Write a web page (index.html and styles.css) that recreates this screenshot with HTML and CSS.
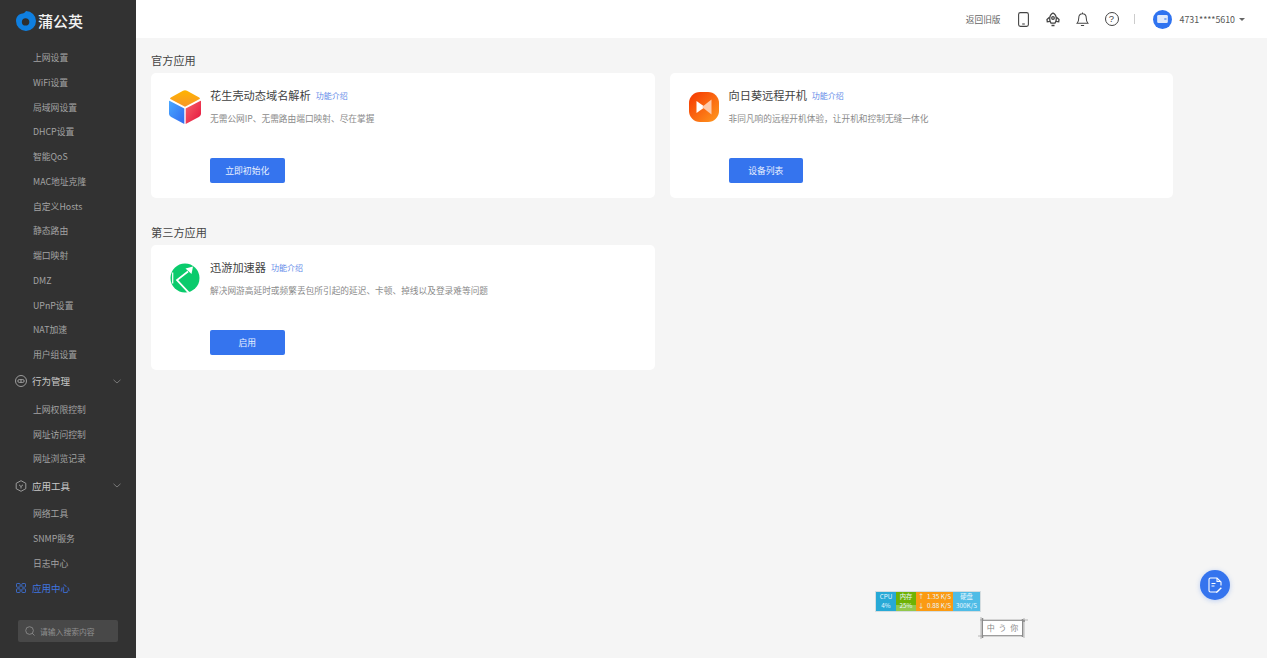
FILE: index.html
```html
<!DOCTYPE html>
<html lang="zh-CN">
<head>
<meta charset="utf-8">
<title>蒲公英</title>
<link rel="stylesheet" href="styles.css">
</head>
<body>
<div class="app">
  <aside class="sidebar">
    <div class="logo">
      <svg class="logo-mark" viewBox="0 0 20 20" width="20" height="20"><path fill="#0f7fe0" d="M10 0a10 10 0 0 1 10 10 10 10 0 0 1-10 10A10 10 0 0 1 0 10C0 5.500 3 2.800 6.500 2.500 8 2.300 9 1.500 10 0z"/><path fill="#2e2e2e" d="M9.500 7.200c2.200 0 3.900 1.600 3.900 3.700s-1.700 3.700-3.900 3.700-3.700-1.600-3.700-3.700 1.500-3.700 3.700-3.700z"/></svg>
      <span class="logo-text">蒲公英</span>
    </div>
    <nav class="nav">
      <a class="sub">上网设置</a>
      <a class="sub">WiFi设置</a>
      <a class="sub">局域网设置</a>
      <a class="sub">DHCP设置</a>
      <a class="sub">智能QoS</a>
      <a class="sub">MAC地址克隆</a>
      <a class="sub">自定义Hosts</a>
      <a class="sub">静态路由</a>
      <a class="sub">端口映射</a>
      <a class="sub">DMZ</a>
      <a class="sub">UPnP设置</a>
      <a class="sub">NAT加速</a>
      <a class="sub">用户组设置</a>
      <div class="group">
        <svg viewBox="0 0 12 12" width="12" height="12" fill="none" stroke="#b5b5b5" stroke-width=".8"><circle cx="6" cy="6" r="5.500"/><rect x="2.800" y="4.600" width="6.400" height="2.800" rx="1.400"/><path d="M6 4.600v2.800"/></svg>
        <span>行为管理</span>
        <svg class="chev" viewBox="0 0 8 5" width="8" height="5" fill="none" stroke="#8a8a8a" stroke-width=".8"><path d="M.5.8 4 4 7.500.8"/></svg>
      </div>
      <a class="sub">上网权限控制</a>
      <a class="sub">网址访问控制</a>
      <a class="sub">网址浏览记录</a>
      <div class="group">
        <svg viewBox="0 0 12 12" width="12" height="12" fill="none" stroke="#b5b5b5" stroke-width=".8"><path d="M6 .7 10.800 3.300v5.400L6 11.300 1.200 8.700V3.300z"/><path d="M4 4.800 6 6.500l2-1.700M6 6.500v2"/></svg>
        <span>应用工具</span>
        <svg class="chev" viewBox="0 0 8 5" width="8" height="5" fill="none" stroke="#8a8a8a" stroke-width=".8"><path d="M.5.8 4 4 7.500.8"/></svg>
      </div>
      <a class="sub">网络工具</a>
      <a class="sub">SNMP服务</a>
      <a class="sub">日志中心</a>
      <div class="group active">
        <svg viewBox="0 0 12 12" width="10" height="10" fill="none" stroke="#3f75e0" stroke-width="1"><rect x=".6" y=".6" width="4.400" height="4.400" rx=".8"/><rect x="7" y=".6" width="4.400" height="4.400" rx=".8"/><rect x=".6" y="7" width="4.400" height="4.400" rx=".8"/><rect x="7" y="7" width="4.400" height="4.400" rx=".8"/></svg>
        <span>应用中心</span>
      </div>
    </nav>
    <div class="search">
      <svg viewBox="0 0 11 11" width="10" height="10" fill="none" stroke="#999" stroke-width=".8"><circle cx="5" cy="5" r="4.200"/><path d="m8 8 2.500 2.500"/></svg>
      <span>请输入搜索内容</span>
    </div>
  </aside>

  <div class="main">
    <header class="topbar">
      <span class="old">返回旧版</span>
      <svg class="tool tool-phone" viewBox="0 0 11 15" width="11" height="15" fill="none" stroke="#444" stroke-width="1.100"><rect x=".6" y=".6" width="9.800" height="13.800" rx="1.800"/><path d="M4.200 12h2.600"/></svg>
      <svg class="tool" viewBox="0 0 14 15" width="14" height="15" fill="none" stroke="#444" stroke-width="1.300"><path d="M7 1c2.300 1.200 3.300 3.300 3.300 5.700 0 1.800-.5 3.300-1.300 4.500H5C4.200 10 3.700 8.500 3.700 6.700 3.700 4.300 4.700 2.200 7 1z"/><circle cx="7" cy="6" r="1.300"/><path d="M3.500 5.200 1 7.600l.3 2.200 2.900-.4M10.500 5.200 13 7.600l-.3 2.200-2.900-.4M5.500 13.500h3"/></svg>
      <svg class="tool" viewBox="0 0 13 16" width="13" height="15" fill="none" stroke="#444" stroke-width="1.100"><path d="M6.500 1.800c-2.700 0-4 2-4 4.500 0 2.800-.5 4.300-1.800 5.700h11.600C11 10.600 10.500 9.100 10.500 6.300c0-2.500-1.300-4.500-4-4.500zM6.500.5v1.300M4.800 14.300h3.400"/></svg>
      <span class="help">?</span>
      <span class="sep"></span>
      <span class="avatar"><svg viewBox="0 0 12 9" width="11" height="8"><rect width="12" height="9" rx="1.500" fill="#dfe9fb"/><rect x="8" y="3.500" width="2.500" height="2" fill="#7aa3ee"/></svg></span>
      <span class="account">4731****5610</span>
      <span class="caret"></span>
    </header>

    <main class="content">
      <h2 class="section-title">官方应用</h2>
      <div class="cards">
        <article class="card">
          <svg class="app-icon icon-cube" viewBox="0 0 32 34" width="32" height="34">
            <defs>
              <linearGradient id="cy" x1="0" y1="0" x2="0" y2="1"><stop offset="0" stop-color="#ffb400"/><stop offset="1" stop-color="#f7962a"/></linearGradient>
              <linearGradient id="cb" x1="0" y1="0" x2="1" y2="1"><stop offset="0" stop-color="#4aa8ff"/><stop offset="1" stop-color="#2f6bf0"/></linearGradient>
              <linearGradient id="cr" x1="0" y1="0" x2="1" y2="1"><stop offset="0" stop-color="#f8646a"/><stop offset="1" stop-color="#e4123c"/></linearGradient>
            </defs>
            <path fill="url(#cy)" d="M14 .8c1.300-.7 2.700-.7 4 0l12.200 6.600c.9.500.9 1.400 0 1.900L16 16.800 1.800 9.300c-.9-.5-.9-1.400 0-1.900z"/>
            <path fill="url(#cb)" d="M.4 10.700 15.300 18.500V34L2.200 27C.8 26.200 0 25 0 23.500V11.500c0-.4.100-.6.400-.8z"/>
            <path fill="url(#cr)" d="M31.600 10.700 16.700 18.500V34l13.100-7c1.400-.8 2.200-2 2.200-3.500V11.500c0-.4-.1-.6-.4-.8z"/>
          </svg>
          <div class="card-body">
            <div class="card-head"><h3>花生壳动态域名解析</h3><a class="intro">功能介绍</a></div>
            <p class="desc">无需公网IP、无需路由端口映射、尽在掌握</p>
            <button class="btn">立即初始化</button>
          </div>
        </article>
        <article class="card">
          <svg class="app-icon icon-sun" viewBox="0 0 30 30" width="30" height="30">
            <defs><linearGradient id="so" x1="0" y1="0" x2="1" y2="1"><stop offset="0" stop-color="#f53500"/><stop offset="1" stop-color="#ff9a20"/></linearGradient></defs>
            <rect width="30" height="30" rx="11" fill="url(#so)"/>
            <path fill="#fff" d="M7.500 9 16 15l-8.500 6z"/>
            <path fill="#ffc9a8" d="M22.500 7.500v15L13 15z"/>
          </svg>
          <div class="card-body">
            <div class="card-head"><h3>向日葵远程开机</h3><a class="intro">功能介绍</a></div>
            <p class="desc">非同凡响的远程开机体验，让开机和控制无缝一体化</p>
            <button class="btn">设备列表</button>
          </div>
        </article>
      </div>
      <h2 class="section-title second">第三方应用</h2>
      <div class="cards">
        <article class="card">
          <svg class="app-icon icon-xun" viewBox="0 0 30 30" width="30" height="30">
            <circle cx="15" cy="15" r="14.500" fill="#0acb6c"/>
            <path fill="none" stroke="#fff" stroke-width="1.200" d="M2.700 9.500v11"/>
            <path fill="none" stroke="#fff" stroke-width="1.800" d="M18 8.500 7 17l13 14"/>
            <path fill="#fff" d="M15.500 5.500 23 3.500 21.500 11z"/>
          </svg>
          <div class="card-body">
            <div class="card-head"><h3>迅游加速器</h3><a class="intro">功能介绍</a></div>
            <p class="desc">解决网游高延时或频繁丢包所引起的延迟、卡顿、掉线以及登录难等问题</p>
            <button class="btn">启用</button>
          </div>
        </article>
      </div>
    </main>
  </div>
</div>

<div class="monitor">
  <div class="m-cell m-cpu"><span>CPU</span><span>4%</span></div>
  <div class="m-cell m-mem"><span>内存</span><span>25%</span></div>
  <div class="m-cell m-net"><span>↑&nbsp; 1.35 K/S</span><span>↓&nbsp; 0.88 K/S</span></div>
  <div class="m-cell m-disk"><span>硬盘</span><span>300K/S</span></div>
</div>
<div class="stamp">
  <svg class="stamp-frame" viewBox="0 0 50 22" width="50" height="22" fill="none" stroke="#8c8c8c"><path stroke-width="1.500" d="M4 4h43M4 18h41M4.500 1v20M44.500 2v18"/><path stroke-width=".6" d="M2 3h48M0 19h44M3 0v22M46 1v20"/></svg>
  <span class="stamp-text">中 う 你</span>
</div>
<button class="fab" aria-label="反馈">
  <svg viewBox="0 0 14 16" width="14" height="16" fill="none" stroke="#fff" stroke-width="1.100"><path d="M9 15H2.500C1.700 15 1 14.300 1 13.500v-11C1 1.700 1.700 1 2.500 1H9l4 4v3.500"/><path d="M9 1v3.500h4M3.500 6.500h4M3.500 9h3"/><path d="m8.500 14.500 4.300-4.300 1 1-4.300 4.300-1.500.4z" fill="#fff" stroke="none"/></svg>
</button>
</body>
</html>
```
FILE: styles.css
```css
* { box-sizing: border-box; }
html, body { margin: 0; height: 100%; }
body {
  font-family: "Noto Sans CJK SC", "Noto Sans", sans-serif;
  background: #f5f5f5;
  overflow: hidden;
}
.app { display: flex; height: 658px; }

.sidebar {
  flex: 0 0 136px;
  background: #323232;
  display: flex;
  flex-direction: column;
  overflow: hidden;
}
.logo {
  display: flex;
  align-items: center;
  gap: 2px;
  height: 46px;
  padding: 0 0 5px 16px;
  flex: none;
}
.logo-text { color: #f2f2f2; font-size: 15px; font-weight: 500; line-height: 1; }
.nav { display: flex; flex-direction: column; flex: none; }
.sub {
  display: block;
  height: 24.75px;
  line-height: 24.75px;
  padding-left: 33px;
  font-size: 8.8px;
  color: #a3a3a3;
  white-space: nowrap;
}
.group {
  display: flex;
  align-items: center;
  height: 30px;
  padding: 0 0 3px 15px;
  font-size: 9.5px;
  color: #c9c9c9;
  gap: 5px;
}
.chev { margin-left: auto; margin-right: 15px; }
.group.active { color: #3f75e0; padding: 0 0 0 16px; gap: 6px; height: 23px; }
.search {
  margin: 21px 0 0 18px;
  width: 100px;
  height: 22px;
  background: #484848;
  border-radius: 2px;
  display: flex;
  align-items: center;
  gap: 5px;
  padding-left: 7px;
  font-size: 7.8px;
  color: #8f8f8f;
}

.main { flex: 1; min-width: 0; display: flex; flex-direction: column; }
.topbar {
  flex: none;
  height: 38px;
  background: #fff;
  display: flex;
  align-items: center;
  padding-right: 22px;
  justify-content: flex-end;
  color: #555;
}
.old { font-size: 8.7px; margin-right: 17px; color: #666; white-space: nowrap; }
.tool { margin-right: 16px; flex: none; }
.tool-phone { margin-right: 17px; }
.help {
  width: 14px;
  height: 14px;
  border: 1.1px solid #444;
  border-radius: 50%;
  font-size: 9.5px;
  line-height: 12px;
  text-align: center;
  color: #444;
  font-family: "Liberation Sans", sans-serif;
}
.sep { width: 1px; height: 10px; background: #ccc; margin: 0 18px 0 15px; }
.avatar {
  width: 19px;
  height: 19px;
  border-radius: 50%;
  background: #2f73f0;
  display: flex;
  align-items: center;
  justify-content: center;
  margin-right: 8px;
}
.account { font-size: 8.8px; color: #555; }
.caret {
  width: 0;
  height: 0;
  margin-left: 4px;
  border: 3px solid transparent;
  border-top-color: #666;
  border-bottom-width: 0;
}

.content { flex: 1; padding: 0 94px 0 15px; }
.section-title {
  margin: 0;
  height: 35px;
  line-height: 45px;
  font-size: 11.2px;
  font-weight: 400;
  color: #444;
  white-space: nowrap;
}
.section-title.second { height: 34px; margin-top: 13px; line-height: 42px; }
.cards { display: grid; grid-template-columns: repeat(2, 1fr); gap: 15px; }
.card {
  height: 125px;
  background: #fff;
  border-radius: 5px;
  display: flex;
}
.app-icon { flex: none; margin: 17px 9px 0 18px; }
.icon-sun { margin: 19px 10px 0 19px; }
.icon-xun { margin: 18px 10px 0 19px; }
.card-body { min-width: 0; }
.card-head { display: flex; align-items: center; gap: 5px; margin-top: 14px; height: 17px; }
h3 { margin: 0; font-size: 11.2px; font-weight: 400; color: #3f3f3f; line-height: 17px; white-space: nowrap; }
.intro { font-size: 8px; line-height: 17px; color: #5f8ae8; white-space: nowrap; }
.desc { margin: 8px 0 0; font-size: 8.7px; line-height: 13px; color: #8a8a8a; white-space: nowrap; }
.btn {
  display: block;
  margin-top: 33px;
  width: 74.5px;
  height: 25px;
  border: 0;
  border-radius: 2px;
  background: #3574ee;
  color: #e8f0ff;
  font: inherit;
  font-size: 8.8px;
  padding: 0;
}
.monitor {
  position: absolute;
  left: 875px;
  top: 591px;
  width: 106px;
  height: 21px;
  display: flex;
  border: 1px solid #d5dde0;
  font-size: 6.3px;
  line-height: 8.5px;
  color: #e8f6ff;
  text-align: center;
}
.m-cell { display: flex; flex-direction: column; justify-content: center; white-space: nowrap; }
.m-cpu { width: 20px; background: #27a9d6; }
.m-mem { width: 20px; background: linear-gradient(#6fb204 70%, #93c84c 70%); }
.m-net { width: 37px; background: #fb9a12; }
.m-disk { flex: 1; background: #4fbce6; }
.stamp {
  position: absolute;
  left: 978px;
  top: 617px;
  width: 50px;
  height: 22px;
}
.stamp-frame { position: absolute; left: 0; top: 0; }
.stamp-text {
  position: absolute;
  left: 5px;
  top: 4px;
  width: 39px;
  height: 14px;
  background: #fff;
  font-size: 8px;
  line-height: 14px;
  color: #888;
  text-align: center;
  white-space: nowrap;
  word-spacing: 2px;
}
.fab {
  position: absolute;
  left: 1200px;
  top: 570px;
  width: 30px;
  height: 30px;
  border: 0;
  padding: 0;
  border-radius: 50%;
  background: #3574ee;
  box-shadow: 0 1px 5px rgba(53, 116, 238, .3);
  display: flex;
  align-items: center;
  justify-content: center;
}
```
